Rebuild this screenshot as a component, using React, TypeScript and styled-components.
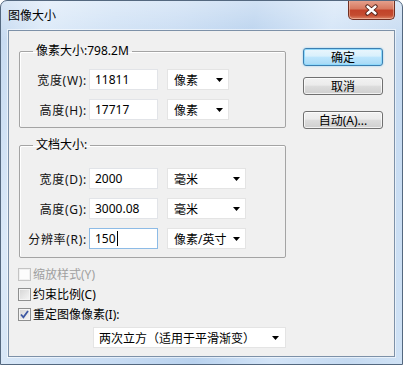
import React from 'react';
import styled, { createGlobalStyle, css } from 'styled-components';

const GlobalStyle = createGlobalStyle`
  body {
    margin: 0;
    font-family: 'Noto Sans', 'Noto Sans CJK SC', sans-serif;
    font-size: 12px;
    color: #000;
  }
`;

interface IRow {
  label: string;
  value: string;
  unit: string;
  focused?: boolean;
}

const pixelRows: IRow[] = [
  { label: '宽度(W):', value: '11811', unit: '像素' },
  { label: '高度(H):', value: '17717', unit: '像素' },
];

const docRows: IRow[] = [
  { label: '宽度(D):', value: '2000', unit: '毫米' },
  { label: '高度(G):', value: '3000.08', unit: '毫米' },
  { label: '分辨率(R):', value: '150', unit: '像素/英寸', focused: true },
];

function Arrow() {
  return (
    <svg width="7" height="4" viewBox="0 0 7 4">
      <path d="M0 0h7L3.5 4z" fill="#000" />
    </svg>
  );
}

function CheckRow({ label, checked, disabled }: { label: string; checked?: boolean; disabled?: boolean }) {
  return (
    <CheckLine disabled={disabled}>
      <CheckBox disabled={disabled}>
        {checked && (
          <svg width="11" height="11" viewBox="0 0 11 11">
            <path d="M2 5.5l2.4 2.8L9 2" fill="none" stroke="#3d58a3" strokeWidth="1.8" />
          </svg>
        )}
      </CheckBox>
      {label}
    </CheckLine>
  );
}

function Group({ title, rows, selectWidth, padTop, padBottom }: {
  title: string;
  rows: IRow[];
  selectWidth: number;
  padTop: number;
  padBottom: number;
}) {
  return (
    <GroupBox padTop={padTop} padBottom={padBottom}>
      <Legend>{title}</Legend>
      <Rows>
        {rows.map(row => (
          <Row key={row.label}>
            <Label>{row.label}</Label>
            <Field focused={row.focused}>
              {row.value}
              {row.focused && <Caret />}
            </Field>
            <Select w={selectWidth}>
              <span>{row.unit}</span>
              <Arrow />
            </Select>
          </Row>
        ))}
      </Rows>
    </GroupBox>
  );
}

export default function App() {
  return (
    <>
      <GlobalStyle />
      <Window>
        <TitleBar>
          <Title>图像大小</Title>
          <CloseButton>
            <svg width="15" height="12" viewBox="0 0 15 12">
              <path d="M3.5 2.5l8 7M11.5 2.5l-8 7" stroke="#4a1c14" strokeWidth="4.2" strokeLinecap="round" />
              <path d="M3.5 2.5l8 7M11.5 2.5l-8 7" stroke="#fff" strokeWidth="2.4" strokeLinecap="round" />
            </svg>
          </CloseButton>
        </TitleBar>
        <Client>
          <LeftColumn>
            <Group title="像素大小:798.2M" rows={pixelRows} selectWidth={62} padTop={10} padBottom={7} />
            <Spacer />
            <Group title="文档大小:" rows={docRows} selectWidth={79} padTop={15} padBottom={8} />
            <Checks>
              <CheckRow label="缩放样式(Y)" disabled />
              <CheckRow label="约束比例(C)" />
              <CheckRow label="重定图像像素(I):" checked />
            </Checks>
            <Resample>
              <span>两次立方（适用于平滑渐变）</span>
              <Arrow />
            </Resample>
          </LeftColumn>
          <RightColumn>
            <Button primary gap={5}>确定</Button>
            <Button gap={11}>取消</Button>
            <Button gap={16}>自动(A)...</Button>
          </RightColumn>
        </Client>
      </Window>
    </>
  );
}

const Window = styled.div`
  box-sizing: border-box;
  width: 403px;
  height: 365px;
  display: flex;
  flex-direction: column;
  border: 1px solid #54687f;
  border-radius: 7px 7px 0 0;
  overflow: hidden;
  background:
    linear-gradient(to bottom, rgba(255, 255, 255, 0.35), rgba(255, 255, 255, 0) 40px),
    linear-gradient(100deg, #c3d8f0 0%, #dbe9f8 10%, #cfe1f5 25%, #c8dcf3 38%, #b9d2ee 55%, #d3e4f7 72%, #c5daf1 88%, #d0e2f5 100%);
`;

const TitleBar = styled.div`
  height: 29px;
  display: flex;
  justify-content: space-between;
  align-items: flex-start;
  flex-shrink: 0;
`;

const Title = styled.div`
  padding: 6px 0 0 7px;
  font-family: 'Noto Sans CJK SC', sans-serif;
  font-size: 12px;
  line-height: 16px;
  color: #000;
`;

const CloseButton = styled.div`
  box-sizing: border-box;
  width: 47px;
  height: 20px;
  margin: -1px 7px 0 0;
  display: flex;
  align-items: center;
  justify-content: center;
  border: 1px solid #6f2f22;
  border-top: none;
  border-radius: 0 0 5px 5px;
  background: linear-gradient(to bottom, #e6a491 0%, #d77a61 45%, #c2432a 55%, #c44c30 80%, #dc8366 100%);
  box-shadow: inset 0 0 0 1px rgba(255, 220, 200, 0.45);
`;

const Client = styled.div`
  flex: 1;
  margin: 0 7px 7px 7px;
  padding: 12px 0 0 10px;
  display: grid;
  grid-template-columns: 267px 80px;
  column-gap: 17px;
  align-items: start;
  background: #f0f0f0;
  border: 1px solid #7d91a8;
  box-shadow: 0 0 0 1px rgba(255, 255, 255, 0.55);
`;

const LeftColumn = styled.div`
  display: flex;
  flex-direction: column;
`;

const RightColumn = styled.div`
  display: flex;
  flex-direction: column;
`;

const Spacer = styled.div`
  height: 9px;
`;

const GroupBox = styled.fieldset<{ padTop: number; padBottom: number }>`
  margin: 0;
  min-width: 0;
  padding: ${p => p.padTop}px 0 ${p => p.padBottom}px 0;
  border: 1px solid #a4a4a4;
  border-radius: 2px;
  box-shadow: inset 1px 1px 0 #fff;
`;

const Legend = styled.legend`
  margin-left: 13px;
  padding: 0 3px;
  font-size: 12px;
  line-height: 16px;
`;

const Rows = styled.div`
  display: flex;
  flex-direction: column;
  gap: 9px;
`;

const Row = styled.div`
  display: flex;
  align-items: center;
  height: 21px;
`;

const Label = styled.div`
  width: 67px;
  margin-right: 2px;
  text-align: right;
  white-space: nowrap;
  font-size: 12px;
  letter-spacing: 0.7px;
  color: #111;
`;

const Field = styled.div<{ focused?: boolean }>`
  box-sizing: border-box;
  width: 69px;
  height: 21px;
  padding-left: 5px;
  display: flex;
  align-items: center;
  background: #fff;
  border: 1px solid #e2e4e8;
  font-size: 12px;
  ${p =>
    p.focused &&
    css`
      border-color: #8dbbe6;
    `}
`;

const Caret = styled.span`
  display: inline-block;
  width: 1px;
  height: 15px;
  margin-left: 1px;
  background: #000;
`;

const Select = styled.div<{ w: number }>`
  box-sizing: border-box;
  width: ${p => p.w}px;
  height: 21px;
  margin-left: 9px;
  padding: 0 5px 0 6px;
  display: flex;
  align-items: center;
  justify-content: space-between;
  background: #fff;
  border: 1px solid #e4e4e4;
  font-size: 12px;
`;

const Checks = styled.div`
  margin: 6px 0 0 -1px;
  display: flex;
  flex-direction: column;
`;

const CheckLine = styled.div<{ disabled?: boolean }>`
  height: 20px;
  display: flex;
  align-items: center;
  gap: 2px;
  font-size: 12px;
  color: ${p => (p.disabled ? '#a0a0a0' : '#000')};
`;

const CheckBox = styled.div<{ disabled?: boolean }>`
  box-sizing: border-box;
  width: 13px;
  height: 13px;
  display: flex;
  align-items: center;
  justify-content: center;
  border: 1px solid ${p => (p.disabled ? '#c4c4c4' : '#8e8f8f')};
  background: ${p =>
    p.disabled
      ? '#fcfcfc'
      : 'linear-gradient(135deg, #d4d4d4 0%, #e9e9e9 60%, #f6f6f6 100%)'};
  box-shadow: inset 0 0 0 1px ${p => (p.disabled ? '#f0f0f0' : '#f4f4f4')};
`;

const Resample = styled.div`
  box-sizing: border-box;
  width: 193px;
  height: 21px;
  margin: 3px 0 0 74px;
  padding: 0 6px 0 5px;
  display: flex;
  align-items: center;
  justify-content: space-between;
  background: #fff;
  border: 1px solid #e4e4e4;
  font-size: 12px;
`;

const Button = styled.div<{ primary?: boolean; gap: number }>`
  box-sizing: border-box;
  height: 18px;
  margin-top: ${p => p.gap}px;
  display: flex;
  align-items: center;
  justify-content: center;
  border: 1px solid #707070;
  border-radius: 3px;
  font-size: 12px;
  background: linear-gradient(to bottom, #f2f2f2 0%, #ebebeb 45%, #dddddd 50%, #cfcfcf 100%);
  box-shadow: inset 0 0 0 1px rgba(255, 255, 255, 0.7);
  ${p =>
    p.primary &&
    css`
      border-color: #3c7fb1;
      background: linear-gradient(to bottom, #eaf6fd 0%, #d9f0fc 45%, #bee6fd 50%, #a7d9f5 100%);
      box-shadow: inset 0 0 0 1px #8fd9fb, 0 0 2px #7fc6ef;
    `}
`;
